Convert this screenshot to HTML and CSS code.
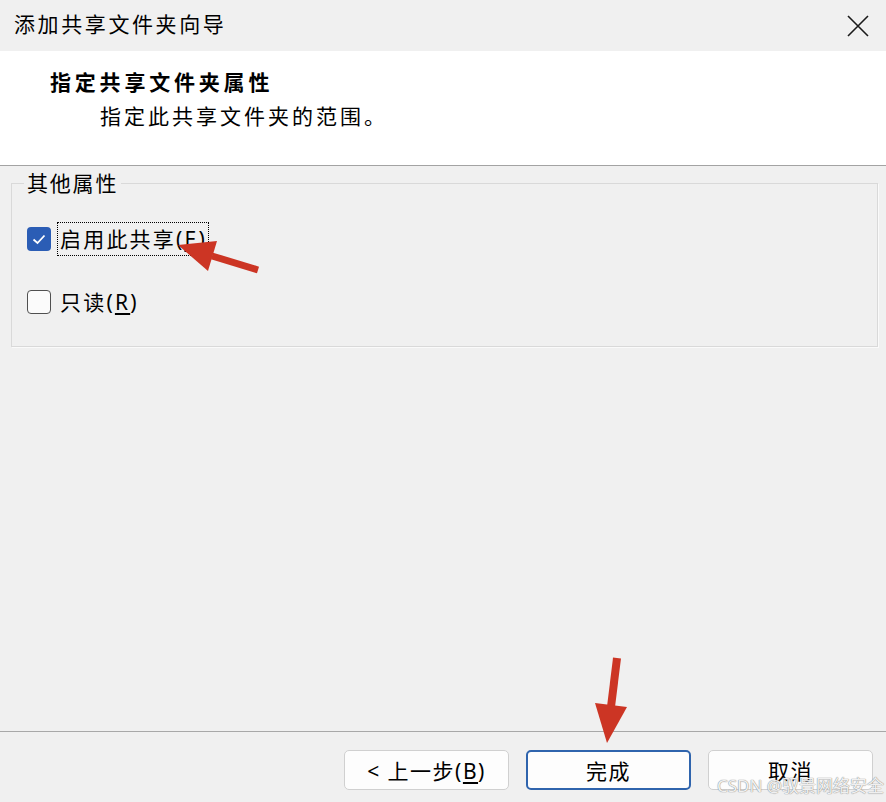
FILE: index.html
```html
<!DOCTYPE html>
<html lang="zh-CN">
    <head>
        <meta charset="UTF-8">
        <title>添加共享文件夹向导</title>
        <link rel="stylesheet" href="styles.css">
    </head>
    <body>
        <div class="titlebar">
            <span class="title">添加共享文件夹向导</span>
            <svg class="close" width="22" height="22" viewBox="0 0 22 22">
                <path d="M1 1 L21 21 M21 1 L1 21" stroke="#1a1a1a" stroke-width="1.6" fill="none"/>
            </svg>
        </div>

        <div class="header">
            <h3>指定共享文件夹属性</h3>
            <p>指定此共享文件夹的范围。</p>
        </div>

        <div class="content">
            <fieldset class="group">
                <legend>其他属性</legend>
                <div class="row">
                    <span class="box checked">
                        <svg width="24" height="24" viewBox="0 0 24 24">
                            <path d="M6.5 12.5 L10.5 16 L17.5 8.5" stroke="#ffffff" stroke-width="1.8" fill="none"/>
                        </svg>
                    </span>
                    <span class="label focus">启用此共享(<u>E</u>)</span>
                </div>
                <div class="row">
                    <span class="box"></span>
                    <span class="label">只读(<u>R</u>)</span>
                </div>
            </fieldset>
        </div>

        <div class="footer">
            <button class="btn">&lt; 上一步(<u>B</u>)</button>
            <button class="btn default">完成</button>
            <button class="btn">取消</button>
        </div>

        <svg class="arrows" width="886" height="802" viewBox="0 0 886 802">
            <line x1="212" y1="256" x2="258" y2="270" stroke="#cc3524" stroke-width="7"/>
            <polygon points="178,245 217,241 208,271" fill="#cc3524"/>
            <line x1="611" y1="707" x2="617" y2="658" stroke="#cc3524" stroke-width="8"/>
            <polygon points="607,743 627,707 595,703" fill="#cc3524"/>
        </svg>

        <div class="watermark">CSDN @驭景网络安全</div>
    </body>
</html>
```

FILE: styles.css
```css
body {
    margin: 0;
    width: 886px;
    height: 802px;
    overflow: hidden;
    position: relative;
    display: flex;
    flex-direction: column;
    background: #f0f0f0;
    color: #000000;
    font-family: "Noto Sans", "Noto Sans CJK SC", sans-serif;
    font-size: 21px;
}

.titlebar {
    height: 51px;
    box-sizing: border-box;
    display: flex;
    align-items: center;
    justify-content: space-between;
    padding: 0 17px 4px 14px;

    .title {
        letter-spacing: 2.6px;
        line-height: 30px;
    }

    .close {
        margin-top: 4px;
    }
}

.header {
    height: 115px;
    box-sizing: border-box;
    background: #ffffff;
    border-bottom: 1px solid #a3a3a3;
    padding: 16px 0 0 50px;

    h3 {
        margin: 0;
        font-size: 21px;
        line-height: 30px;
        letter-spacing: 3.8px;
        font-weight: bold;
    }

    p {
        margin: 4px 0 0 50px;
        font-size: 21px;
        line-height: 30px;
        letter-spacing: 3px;
    }
}

.content {
    flex: 1;
    padding: 2px 8px 0 11px;

    .group {
        margin: 0;
        padding: 24px 0 27px 15px;
        border: 1px solid #d9d9d9;
        box-shadow: 1px 1px 0 #fafafa;

        legend {
            margin-left: -3px;
            padding: 0 3px;
            line-height: 30px;
            letter-spacing: 1.8px;
        }
    }

    .row {
        display: flex;
        align-items: center;
        height: 34px;
        gap: 6px;
    }

    .row + .row {
        margin-top: 29px;
    }

    .box {
        width: 24px;
        height: 24px;
        box-sizing: border-box;
        border: 1.5px solid #505050;
        border-radius: 4px;
        background: #fbfbfb;
    }

    .box.checked {
        border: none;
        background: #2b5db5;

        svg {
            display: block;
        }
    }

    .label {
        border: 1px dotted transparent;
        padding: 0 1px 0 2px;
        line-height: 32px;
        letter-spacing: 2.2px;

        u {
            text-underline-offset: 3px;
        }
    }

    .label.focus {
        border-color: #000000;
    }
}

.footer {
    height: 71px;
    box-sizing: border-box;
    border-top: 1px solid #a8a8a8;
    display: flex;
    justify-content: flex-end;
    gap: 17px;
    padding: 18px 13px 0 0;

    .btn {
        width: 165px;
        height: 40px;
        box-sizing: border-box;
        background: #fdfdfd;
        border: 1px solid #d0d0d0;
        border-radius: 5px;
        font-family: inherit;
        font-size: 21px;
        letter-spacing: 1.5px;
        color: #000000;
        padding: 0;

        u {
            text-underline-offset: 3px;
        }
    }

    .btn.default {
        border: 2px solid #2f64ad;
    }
}

.arrows {
    position: absolute;
    left: 0;
    top: 0;
    pointer-events: none;
}

.watermark {
    position: absolute;
    left: 717px;
    top: 774px;
    font-size: 17px;
    line-height: 24px;
    color: rgba(255, 255, 255, 0.9);
    text-shadow: 0 0 1px #8a8a8a, 0 0 1px #8a8a8a;
    white-space: nowrap;
}
```
